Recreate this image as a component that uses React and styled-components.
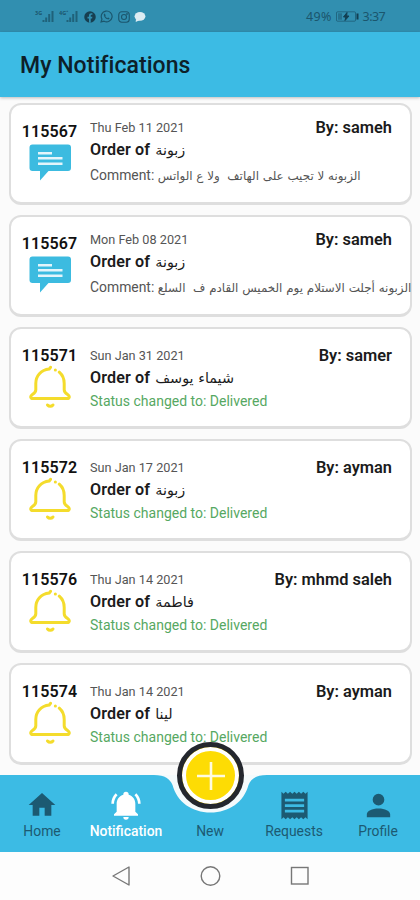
import React from 'react';
import styled, {createGlobalStyle} from 'styled-components';

//-- Styles --//
const colors = {
	bar: '#3cbbe4',
	statusBar: '#318fb0',
	statusInk: '#1b566d',
	page: '#fbfbfb',
	ink: '#1b1b1b',
	muted: '#555',
	green: '#56a862',
	yellow: '#f4dc2c',
	fab: '#fddc04',
	navInk: '#1c5a72',
};

const GlobalStyle = createGlobalStyle`
	* {
		box-sizing: border-box;
	}
	body {
		margin: 0;
		background: ${colors.page};
		font-family: Roboto, 'DejaVu Sans', sans-serif;
	}
`;

const Screen = styled.div`
	display: flex;
	flex-direction: column;
	width: 420px;
	height: 900px;
	overflow: hidden;
	background: ${colors.page};
`;

const StatusBar = styled.div`
	display: flex;
	flex: none;
	justify-content: space-between;
	align-items: center;
	height: 32px;
	padding: 1px 35px 0 35px;
	background: ${colors.statusBar};
	color: ${colors.statusInk};
	font-family: 'Noto Sans', sans-serif;
	font-size: 12.5px;
`;

const StatusGroup = styled.div`
	display: flex;
	align-items: center;
	gap: ${({gap}) => gap}px;
`;

const Clock = styled.span`
	letter-spacing: ${({$tight}) => ($tight ? -0.6 : 0.3)}px;
`;

const Header = styled.header`
	display: flex;
	flex: none;
	align-items: center;
	height: 65px;
	padding: 2px 20px 0;
	background: ${colors.bar};
	box-shadow: 0 1px 3px rgba(0, 0, 0, 0.25);
`;

const Title = styled.h1`
	margin: 0;
	color: #0d2029;
	font-size: 23px;
	font-weight: 500;
	letter-spacing: 0.05px;
`;

const List = styled.main`
	display: flex;
	flex: 1;
	flex-direction: column;
	gap: 10px;
	min-height: 0;
	padding: 6px 8px 0 9px;
	overflow: hidden;
`;

const Card = styled.article`
	display: flex;
	flex: none;
	height: 102px;
	border: 2px solid #dedede;
	border-bottom-width: 3px;
	border-radius: 12px;
	background: #fff;
`;

const IdColumn = styled.div`
	display: flex;
	flex: none;
	flex-direction: column;
	align-items: center;
	width: 77px;
	padding-top: 17px;
`;

const OrderId = styled.div`
	color: #111;
	font-size: 16px;
	font-weight: 600;
	line-height: 20px;
	letter-spacing: 0.15px;
`;

const Details = styled.div`
	flex: 1;
	min-width: 0;
	padding: ${({$comment}) => ($comment ? 13 : 17)}px 18px 0 2px;
	white-space: pre;
`;

const TopLine = styled.div`
	display: flex;
	justify-content: space-between;
	height: 20px;
	line-height: 20px;
`;

const DateText = styled.span`
	color: ${colors.muted};
	font-size: 12.7px;
`;

const Author = styled.span`
	color: ${colors.ink};
	font-size: 16.4px;
	font-weight: 600;
`;

const OrderLine = styled.div`
	height: 22px;
	padding-top: 1px;
	color: ${colors.ink};
	font-size: 16.1px;
	font-weight: 600;
	line-height: 22px;
	letter-spacing: 0.12px;
`;

const Customer = styled.span`
	margin-left: 1px;
	font-family: 'DejaVu Sans', sans-serif;
	font-size: 14.4px;
	font-weight: 400;
	letter-spacing: 0;
`;

const CommentLine = styled.div`
	height: 26px;
	margin-top: 2px;
	color: ${colors.muted};
	font-size: 13.9px;
	line-height: 26px;
`;

const CommentText = styled.span`
	font-family: 'DejaVu Sans', sans-serif;
	font-size: 11.9px;
`;

const StatusLine = styled.div`
	height: 26px;
	color: ${colors.green};
	font-size: 14px;
	line-height: 26px;
`;

const BottomNav = styled.nav`
	position: relative;
	display: flex;
	flex: none;
	height: 77px;
	background: ${colors.bar};
`;

const Notch = styled.svg`
	position: absolute;
	top: 0;
	left: 150px;
`;

const Tab = styled.div`
	position: relative;
	display: flex;
	flex: 1;
	flex-direction: column;
	align-items: center;
	justify-content: flex-end;
	height: 77px;
	padding-bottom: 12px;
	color: ${({$active}) => ($active ? '#fff' : colors.navInk)};
	font-size: 13.9px;
	font-weight: ${({$active}) => ($active ? 500 : 400)};
	line-height: 18px;
`;

const AddButton = styled.div`
	position: absolute;
	top: -33px;
	left: 177px;
	display: flex;
	align-items: center;
	justify-content: center;
	width: 67px;
	height: 67px;
	border: 5px solid #24272e;
	border-radius: 50%;
	background: ${colors.fab};
	box-shadow: inset 0 0 0 4px #fff;
`;

const SystemNav = styled.div`
	display: flex;
	flex: none;
	align-items: center;
	justify-content: center;
	gap: 69px;
	height: 48px;
	background: #fdfdfd;
`;

//-- Icons --//
const Signal = ({label}) => (
	<svg width='20' height='13' viewBox='0 0 20 13' fill='currentColor'>
		<text x='0' y='5' fontSize='5.5' fontWeight='700'>
			{label}
		</text>
		<path d='M7.5 10h2v2h-2zM10.2 7.5h2V12h-2zM13.2 4h2v8h-2zM16.5 1h2v11h-2z' opacity='.8' />
	</svg>
);

const Facebook = () => (
	<svg width='12' height='12' viewBox='0 0 24 24'>
		<circle cx='12' cy='12' r='11.5' fill='#173f50' />
		<path
			fill={colors.statusBar}
			d='M10 23.500V15H7v-3.500h3V9c0-3 1.800-4.500 4.500-4.500l2.300.2v3h-1.500c-1.400 0-1.800.8-1.800 1.700v2.100h3.200L16.200 15h-2.700v8.500z'
		/>
	</svg>
);

const Whatsapp = () => (
	<svg width='13' height='13' viewBox='0 0 24 24' fill='none' stroke='currentColor' strokeWidth='2.2'>
		<path d='M2 22l1.600-5.300A10 10 0 1 1 7.500 20.600z' />
		<path
			fill='currentColor'
			stroke='none'
			d='M8.500 6.500c-1 .4-1.700 1.600-1.400 3 .7 3.500 4 7 7.500 7.800 1.500.3 2.800-.6 3-2l-2.800-1.500-1.300 1.200c-1.800-.8-3.100-2.100-3.900-3.800l1.100-1.300z'
		/>
	</svg>
);

const Instagram = () => (
	<svg width='12' height='12' viewBox='0 0 24 24' fill='none' stroke='currentColor' strokeWidth='2.2'>
		<rect x='1.500' y='1.500' width='21' height='21' rx='6' />
		<circle cx='12' cy='12' r='5' />
		<circle cx='18' cy='6' r='.7' />
	</svg>
);

const Bubble = () => (
	<svg width='12' height='12' viewBox='0 0 12 12' fill='#dcecf3'>
		<ellipse cx='6' cy='5.300' rx='5.400' ry='4.400' />
		<path d='M2 8l-.3 3L6 9z' />
	</svg>
);

const Battery = () => (
	<svg width='23' height='11' viewBox='0 0 23 11' fill='none' stroke='currentColor'>
		<rect x='.5' y='.8' width='19' height='9.400' rx='1' opacity='.7' />
		<path d='M2 2.300h4v6.400H2z' fill='currentColor' stroke='none' opacity='.5' />
		<path d='M11 1.500L7.500 6h2.300L9 9.500 13 5h-2.300z' fill='#123f52' stroke='#123f52' />
		<path d='M21.500 2.500v6' strokeWidth='2' stroke='#123f52' />
	</svg>
);

const CommentIcon = styled(({className}) => (
	<svg className={className} width='43' height='37' viewBox='0 0 43 37'>
		<path
			fill='#3cbbe0'
			d='M3.500.5h35.500a3 3 0 0 1 3 3V24a3 3 0 0 1-3 3H19.500L11 36.500V27H3.500a3 3 0 0 1-3-3V3.500a3 3 0 0 1 3-3z'
		/>
		<path stroke='#e4f5fb' strokeWidth='2.600' d='M9 9.300h14M9 14.300h24.500M9 19.800h24.500' />
	</svg>
))`
	margin: 2px 0 0 1px;
`;

const BellIcon = styled(({className}) => (
	<svg
		className={className}
		width='42'
		height='44'
		viewBox='0 0 42 44'
		fill='none'
		stroke={colors.yellow}
		strokeWidth='3'
		strokeLinecap='round'>
		<path d='M21.500 2.300l-1.300 1.800C12 5 6.800 11 6.800 18.500v6.200c0 2-1 3.300-3.400 4.800C.8 31.300 1.400 33.500 4 33.500h34c2.600 0 3.200-2.200.6-4-2.400-1.500-3.400-2.800-3.400-4.800v-6.200c0-4.800-1.800-8.600-4.900-11.300' />
		<path d='M26.300 5.100h.1' />
		<path d='M18.500 40c1.500 1.800 4 1.800 5.500 0' />
	</svg>
))`
	margin-top: -1px;
`;

const navIcons = {
	Home: {
		size: 32,
		lift: 2,
		d: 'M10,20V14H14V20H19V12H22L12,3L2,12H5V20H10Z',
	},
	Notification: {
		size: 32,
		lift: 2,
		d:
			'M21,19V20H3V19L5,17V11C5,7.9 7.03,5.17 10,4.29C10,4.19 10,4.1 10,4A2,2 0 0,1 12,2A2,2 0 0,1 14,4C14,4.1 14,4.19 14,4.29C16.97,5.17 19,7.9 19,11V17L21,19M14,21A2,2 0 0,1 12,23A2,2 0 0,1 10,21M19.75,3.19L18.33,4.61C20.04,6.3 21,8.6 21,11H23C23,8.07 21.84,5.25 19.75,3.19M1,11H3C3,8.6 3.96,6.3 5.67,4.61L4.25,3.19C2.16,5.25 1,8.07 1,11Z',
	},
	Requests: {
		size: 33,
		lift: 1,
		d:
			'M2.500,22L4,20.5L5.600,22L7.200,20.5L8.800,22L10.400,20.5L12,22L13.600,20.5L15.200,22L16.800,20.5L18.400,22L20,20.5L21.500,22V2L20,3.5L18.400,2L16.800,3.5L15.200,2L13.600,3.5L12,2L10.400,3.5L8.800,2L7.200,3.5L5.600,2L4,3.5L2.500,2M19,9H5V7H19M19,13H5V11H19M19,17H5V15H19V17Z',
	},
	Profile: {
		size: 35,
		lift: 0,
		d:
			'M12,4A4,4 0 0,1 16,8A4,4 0 0,1 12,12A4,4 0 0,1 8,8A4,4 0 0,1 12,4M12,14C16.42,14 20,15.79 20,18V20H4V18C4,15.79 7.58,14 12,14Z',
	},
};

const NavSvg = styled.svg`
	margin-bottom: ${({$lift}) => $lift}px;
`;

const NavIcon = ({name}) => {
	const icon = navIcons[name];
	if (!icon) return null;
	return (
		<NavSvg
			$lift={icon.lift - 1}
			width={icon.size}
			height={icon.size}
			viewBox='0 0 24 24'
			fill='currentColor'>
			<path d={icon.d} />
		</NavSvg>
	);
};

//-- Data --//
const notifications = [
	{
		id: '115567',
		date: 'Thu Feb 11 2021',
		by: 'sameh',
		customer: 'زبونة',
		comment: 'الزبونه لا تجيب على الهاتف  ولا ع الواتس',
	},
	{
		id: '115567',
		date: 'Mon Feb 08 2021',
		by: 'sameh',
		customer: 'زبونة',
		comment: 'الزبونه أجلت الاستلام يوم الخميس القادم ف  السلع',
	},
	{id: '115571', date: 'Sun Jan 31 2021', by: 'samer', customer: 'شيماء يوسف'},
	{id: '115572', date: 'Sun Jan 17 2021', by: 'ayman', customer: 'زبونة'},
	{id: '115576', date: 'Thu Jan 14 2021', by: 'mhmd saleh', customer: 'فاطمة'},
	{id: '115574', date: 'Thu Jan 14 2021', by: 'ayman', customer: 'لينا'},
];

const tabs = ['Home', 'Notification', 'New', 'Requests', 'Profile'];

//-- Components --//
const Notification = ({id, date, by, customer, comment}) => (
	<Card>
		<IdColumn>
			<OrderId>{id}</OrderId>
			{comment ? <CommentIcon /> : <BellIcon />}
		</IdColumn>
		<Details $comment={Boolean(comment)}>
			<TopLine>
				<DateText>{date}</DateText>
				<Author>By: {by}</Author>
			</TopLine>
			<OrderLine>
				Order of <Customer>{customer}</Customer>
			</OrderLine>
			{comment ? (
				<CommentLine>
					Comment: <CommentText>{comment}</CommentText>
				</CommentLine>
			) : (
				<StatusLine>Status changed to: Delivered</StatusLine>
			)}
		</Details>
	</Card>
);

const App = () => {
	return (
		<Screen>
			<GlobalStyle />
			<StatusBar>
				<StatusGroup gap={4.4}>
					<Signal label='3G' />
					<Signal label='4G⁺' />
					<Facebook />
					<Whatsapp />
					<Instagram />
					<Bubble />
				</StatusGroup>
				<StatusGroup gap={4}>
					<Clock>49%</Clock>
					<Battery />
					<Clock $tight>3:37</Clock>
				</StatusGroup>
			</StatusBar>
			<Header>
				<Title>My Notifications</Title>
			</Header>
			<List>
				{notifications.map((item, i) => (
					<Notification key={i} {...item} />
				))}
			</List>
			<BottomNav>
				<Notch width='121' height='39' viewBox='0 0 121 39'>
					<path
						fill='#f4fafc'
						d='M4 0H117C106 0 101 4 98.500 10C94 27 79 37.500 60.500 37.500S27 27 22.500 10C20 4 15 0 4 0z'
					/>
				</Notch>
				{tabs.map(name => (
					<Tab key={name} $active={name === 'Notification'}>
						<NavIcon name={name} />
						{name}
					</Tab>
				))}
				<AddButton>
					<svg width='30' height='30' viewBox='0 0 30 30' stroke='#fffbe0' strokeWidth='2.600'>
						<path d='M15 1v28M1 15h28' />
					</svg>
				</AddButton>
			</BottomNav>
			<SystemNav>
				<svg width='20' height='22' viewBox='0 0 20 22' fill='none' stroke='#777' strokeWidth='1.400'>
					<path d='M18 2v18L2 11z' strokeLinejoin='round' />
				</svg>
				<svg width='21' height='22' viewBox='0 0 21 22' fill='none' stroke='#777' strokeWidth='1.400'>
					<circle cx='10.500' cy='11' r='9.300' />
				</svg>
				<svg width='20' height='22' viewBox='0 0 20 22' fill='none' stroke='#777' strokeWidth='1.400'>
					<rect x='1.500' y='2.500' width='16.500' height='16.500' />
				</svg>
			</SystemNav>
		</Screen>
	);
};

export default App;
